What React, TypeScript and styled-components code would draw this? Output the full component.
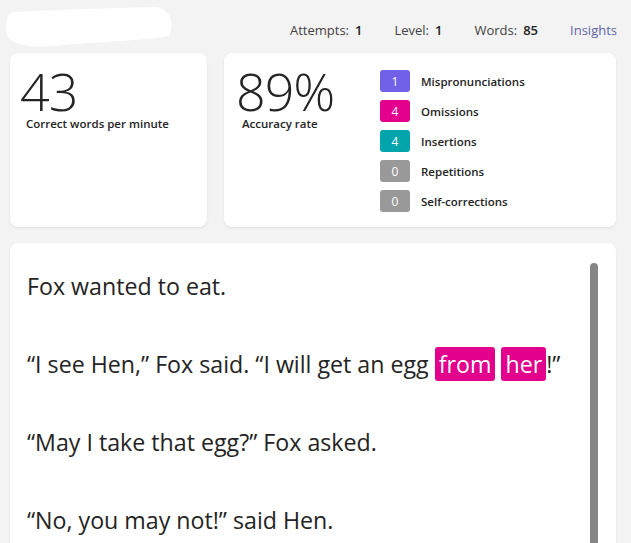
import React from "react";
import styled, { createGlobalStyle } from "styled-components";

const Global = createGlobalStyle`
  html, body { margin: 0; padding: 0; background: #f3f3f3; }
  body { font-family: "Open Sans", "Noto Sans", sans-serif; color: #242424; overflow: hidden; }
`;

const Page = styled.div`
  width: 631px;
  height: 543px;
  overflow: hidden;
  display: flex;
  flex-direction: column;
`;

const Header = styled.header`
  height: 53px;
  flex-shrink: 0;
  display: flex;
  align-items: center;
  justify-content: space-between;
  padding: 0 14px 0 3px;
  box-sizing: border-box;
`;

const Blob = styled.svg`
  width: 170px;
  height: 44px;
  margin-top: -2px;
`;

const Stats = styled.div`
  display: flex;
  gap: 32px;
  align-items: center;
  font-size: 13px;
  margin-top: 7px;
`;

const Stat = styled.span`
  color: #424242;
  display: inline-flex;
  gap: 6px;
`;

const StatValue = styled.b`
  font-weight: 600;
  color: #242424;
`;

const Link = styled.a`
  color: #6264a7;
  text-decoration: none;
`;

const Cards = styled.div`
  display: flex;
  flex-shrink: 0;
  gap: 17px;
  padding: 0 15px 0 10px;
  height: 174px;
`;

const Card = styled.section<{ $w?: number }>`
  background: #fff;
  border-radius: 8px;
  box-shadow: 0 1px 3px rgba(0, 0, 0, 0.08);
  ${(p) => (p.$w ? `width: ${p.$w}px;` : "flex: 1;")}
  box-sizing: border-box;
`;

const MetricCard = styled(Card)`
  padding: 13px 0 0 10px;
`;

const AccuracyCard = styled(Card)`
  display: grid;
  grid-template-columns: 144px 1fr;
  align-items: start;
  padding: 13px 0 0 12px;
`;

const BigNumber = styled.div`
  font-size: 52px;
  font-weight: 300;
  line-height: 50px;
  letter-spacing: -1px;
  color: #242424;
`;

const MetricLabel = styled.div`
  font-size: 11.5px;
  font-weight: 600;
  line-height: 16px;
  padding-left: 6px;
`;

const ErrorList = styled.ul`
  list-style: none;
  margin: 0;
  padding: 4px 0 0 0;
  display: flex;
  flex-direction: column;
  gap: 8px;
`;

const ErrorRow = styled.li`
  display: flex;
  align-items: center;
  gap: 11px;
  font-size: 11.5px;
  font-weight: 600;
`;

const Badge = styled.span<{ $c: string }>`
  width: 30px;
  height: 22px;
  border-radius: 3px;
  background: ${(p) => p.$c};
  color: #fff;
  font-size: 12px;
  font-weight: 400;
  display: flex;
  align-items: center;
  justify-content: center;
`;

const Passage = styled(Card)`
  margin: 16px 15px 0 10px;
  flex: 1;
  display: flex;
  padding: 20px 18px 0 17px;
  border-radius: 8px 8px 0 0;
`;

const Text = styled.div`
  flex: 1;
  padding-top: 5px;
`;

const Para = styled.p`
  margin: 0 0 42px 0;
  font-size: 23.2px;
  line-height: 36px;
  color: #242424;
`;

const Mark = styled.span`
  background: #e3008c;
  color: #fff;
  border-radius: 3px;
  padding: 1px 4px;
`;

const Track = styled.div`
  width: 8px;
  display: flex;
  flex-direction: column;
`;

const Thumb = styled.div`
  flex: 1;
  background: #858585;
  border-radius: 4px 4px 0 0;
`;

const errors = [
  { n: 1, c: "#7160e8", label: "Mispronunciations" },
  { n: 4, c: "#e3008c", label: "Omissions" },
  { n: 4, c: "#03a4ac", label: "Insertions" },
  { n: 0, c: "#999999", label: "Repetitions" },
  { n: 0, c: "#999999", label: "Self-corrections" },
];

export default function App() {
  return (
    <Page>
      <Global />
      <Header>
        <Blob viewBox="0 0 170 44">
          <path
            d="M10 8 C40 6 110 4 150 3 C168 2 172 22 166 32 C150 36 90 38 50 42 C20 44 2 40 3 24 C3 14 6 9 10 8 Z"
            fill="#ffffff"
          />
        </Blob>
        <Stats>
          <Stat>
            Attempts: <StatValue>1</StatValue>
          </Stat>
          <Stat>
            Level: <StatValue>1</StatValue>
          </Stat>
          <Stat>
            Words: <StatValue>85</StatValue>
          </Stat>
          <Link href="#">Insights</Link>
        </Stats>
      </Header>
      <Cards>
        <MetricCard $w={197}>
          <BigNumber>43</BigNumber>
          <MetricLabel>Correct words per minute</MetricLabel>
        </MetricCard>
        <AccuracyCard>
          <div>
            <BigNumber>89%</BigNumber>
            <MetricLabel>Accuracy rate</MetricLabel>
          </div>
          <ErrorList>
            {errors.map((e) => (
              <ErrorRow key={e.label}>
                <Badge $c={e.c}>{e.n}</Badge>
                {e.label}
              </ErrorRow>
            ))}
          </ErrorList>
        </AccuracyCard>
      </Cards>
      <Passage>
        <Text>
          <Para>Fox wanted to eat.</Para>
          <Para>
            “I see Hen,” Fox said. “I will get an egg <Mark>from</Mark> <Mark>her</Mark>!”
          </Para>
          <Para>“May I take that egg?” Fox asked.</Para>
          <Para>“No, you may not!” said Hen.</Para>
        </Text>
        <Track>
          <Thumb />
        </Track>
      </Passage>
    </Page>
  );
}
